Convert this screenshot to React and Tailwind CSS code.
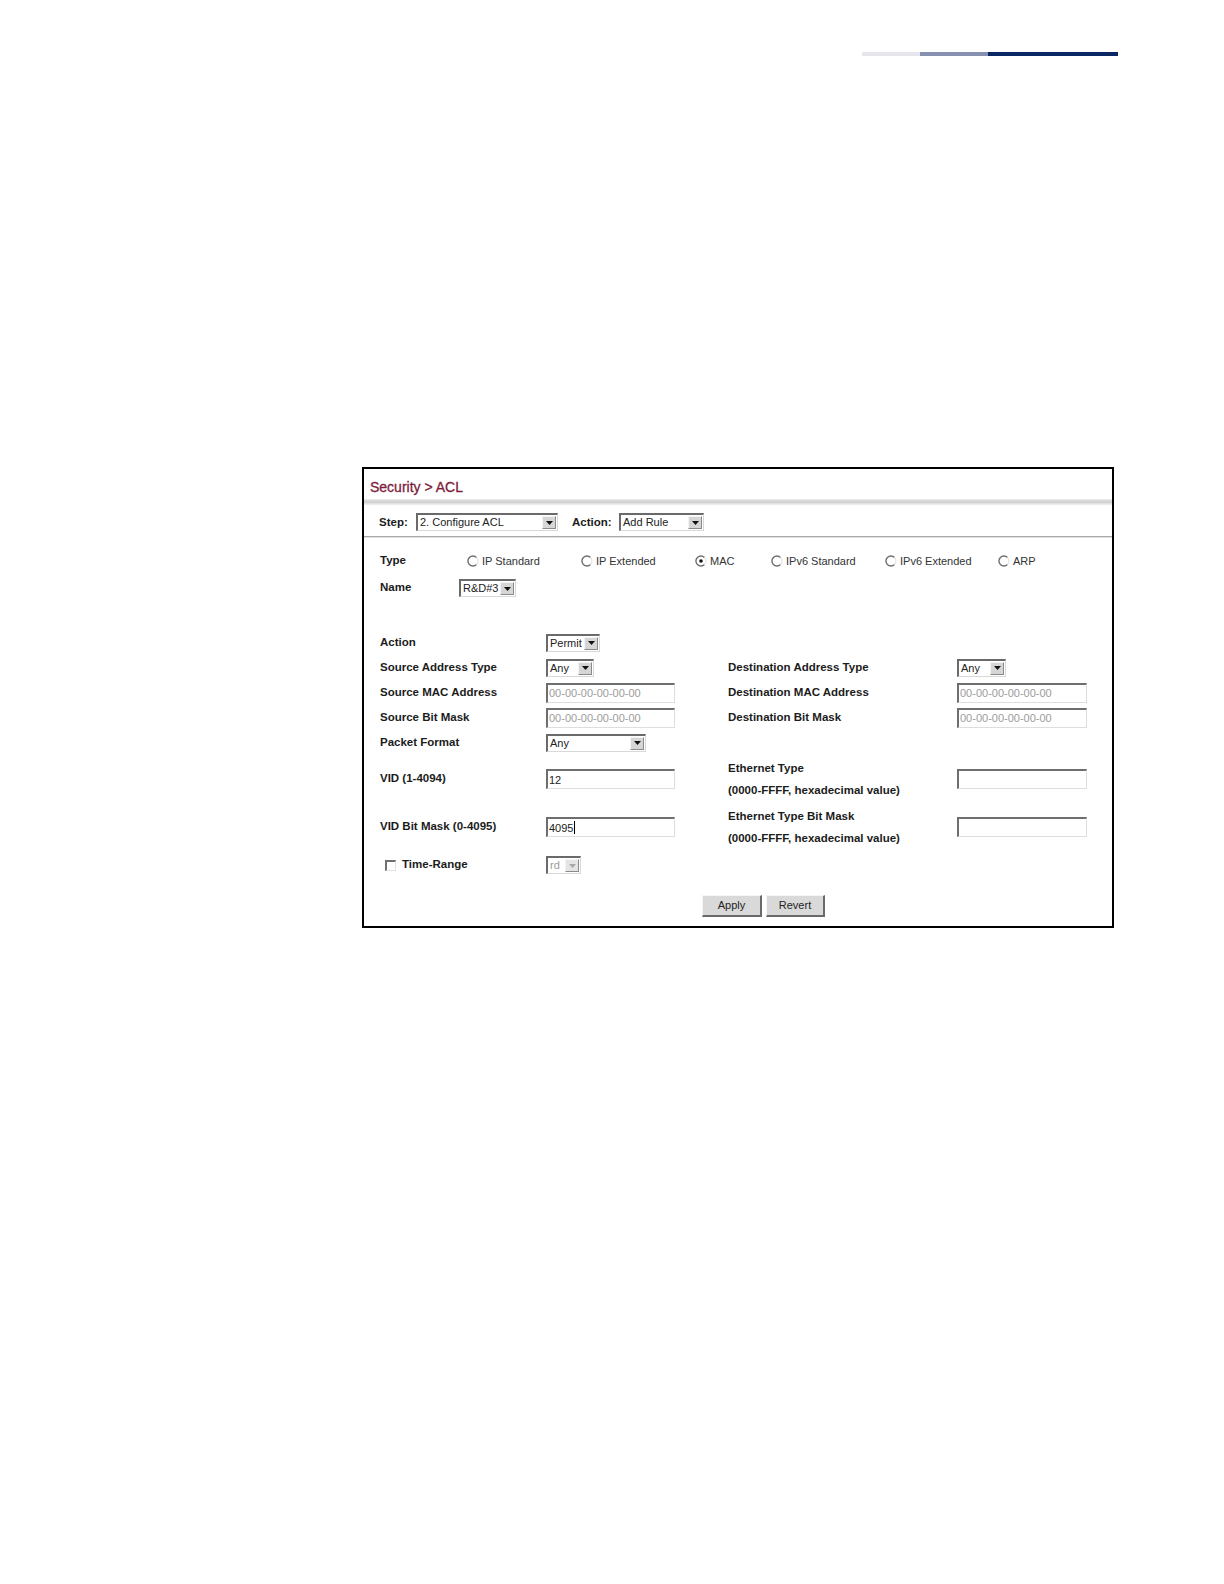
import React from "react";

function Arrow({ disabled }) {
  return (
    <div className={`m-[1px] flex w-[14px] items-center justify-center border border-t-[#f4f4f4] border-l-[#f4f4f4] border-b-[#8a8a8a] border-r-[#8a8a8a] ${disabled ? "bg-[#e4e4e4]" : "bg-[#d6d6d6]"}`}>
      <svg width="7" height="4" viewBox="0 0 7 4">
        <path d="M0 0 L7 0 L3.5 4 Z" fill={disabled ? "#a8a8a8" : "#111"} />
      </svg>
    </div>
  );
}

function Select({ cls, value, disabled }) {
  return (
    <div className={`flex h-[18px] border-t-2 border-l-2 border-b border-r border-t-[#6a6a6a] border-l-[#6a6a6a] border-b-[#d8d8d8] border-r-[#d8d8d8] bg-white ${cls}`}>
      <span className={`flex-1 truncate pl-[2px] text-[11px] leading-[15px] ${disabled ? "text-[#9a9a9a]" : "text-[#222]"}`}>{value}</span>
      <Arrow disabled={disabled} />
    </div>
  );
}

function Input({ cls, value, placeholder, caret }) {
  return (
    <div className={`flex h-[20px] items-center border-t-2 border-l-2 border-b border-r border-t-[#6e6e6e] border-l-[#6e6e6e] border-b-[#dedede] border-r-[#dedede] bg-white pl-[1px] ${cls}`}>
      {value ? (
        <span className="text-[11px] leading-[14px] text-[#222]">{value}</span>
      ) : (
        <span className="text-[11px] leading-[14px] text-[#9c9c9c]">{placeholder}</span>
      )}
      {caret && <span className="ml-[1px] h-[13px] w-[1px] bg-black" />}
    </div>
  );
}

function Radio({ checked }) {
  return (
    <svg width="12" height="12" viewBox="0 0 12 12" className="shrink-0">
      <circle cx="6" cy="6" r="5" fill="#fff" />
      <path d="M9.5 2.5 A5 5 0 1 0 9.5 9.5" fill="none" stroke="#6e6e6e" strokeWidth="1.4" />
      <path d="M9.5 2.5 A5 5 0 0 1 9.5 9.5" fill="none" stroke="#e4e4e4" strokeWidth="1.2" />
      {checked && <circle cx="6" cy="6" r="1.8" fill="#111" />}
    </svg>
  );
}

function RadioItem({ cls, label, checked }) {
  return (
    <div className={`flex items-center ${cls}`}>
      <Radio checked={checked} />
      <span className="ml-[3px] text-[11px] text-[#333]">{label}</span>
    </div>
  );
}

const L = "text-[11.5px] font-bold text-[#1c1c1c]";
const R = "text-[11.5px] font-bold text-[#1c1c1c]";

function Button({ children, cls }) {
  return (
    <div className={`flex h-[22px] items-center justify-center border-t border-l border-b-2 border-r-2 border-t-[#f6f6f6] border-l-[#f6f6f6] border-b-[#6a6a6a] border-r-[#6a6a6a] bg-[#d9d9d9] text-[11px] text-[#222] ${cls}`}>
      {children}
    </div>
  );
}

export default function App() {
  return (
    <div className="min-h-[1584px] w-full bg-white font-['Liberation_Sans',Arial,sans-serif]">
      <div className="flex pl-[862px] pt-[52px]">
        <div className="h-[4px] w-[58px] bg-[#e6e6ec]" />
        <div className="h-[4px] w-[68px] bg-[#8790b0]" />
        <div className="h-[4px] w-[130px] bg-[#0b2763]" />
      </div>

      <div className="ml-[362px] mt-[411px] flex h-[461px] w-[752px] flex-col border-2 border-black bg-white">
        {/* Title */}
        <div className="h-[30px] pl-[6px] pt-[6px]">
          <span className="text-[14px] leading-[18px] text-[#7d1c3c] [-webkit-text-stroke:0.3px_#7d1c3c]">Security &gt; ACL</span>
        </div>
        <div className="h-[6px] bg-gradient-to-b from-[#ececec] via-[#cdcdcd] to-[#f2f2f2]" />

        {/* Step row */}
        <div className="flex h-[31px] items-start pl-[15px] pt-[8px]">
          <div className={`w-[37px] leading-[18px] ${L}`}>Step:</div>
          <Select cls="w-[142px]" value="2. Configure ACL" />
          <div className={`ml-[14px] w-[47px] leading-[18px] ${L}`}>Action:</div>
          <Select cls="w-[85px]" value="Add Rule" />
        </div>
        <div className="h-[1px] bg-[#a9a9a9]" />
        <div className="h-[1px] bg-[#e2e2e2]" />

        {/* Type row */}
        <div className="mt-[12px] flex h-[22px] items-center pl-[16px]">
          <div className={`w-[87px] ${L}`}>Type</div>
          <RadioItem cls="w-[114px]" label="IP Standard" />
          <RadioItem cls="w-[114px]" label="IP Extended" />
          <RadioItem cls="w-[76px]" label="MAC" checked />
          <RadioItem cls="w-[114px]" label="IPv6 Standard" />
          <RadioItem cls="w-[113px]" label="IPv6 Extended" />
          <RadioItem cls="w-[60px]" label="ARP" />
        </div>

        {/* Name row */}
        <div className="mt-[5px] flex h-[22px] items-center pl-[16px]">
          <div className={`w-[79px] ${L}`}>Name</div>
          <Select cls="w-[57px]" value="R&D#3" />
        </div>

        {/* Form grid */}
        <div className="mt-[31px] grid grid-cols-[166px_182px_229px_1fr] pl-[16px]">
          <div className={`flex h-[25px] items-center ${L}`}>Action</div>
          <div className="flex h-[25px] items-center"><Select cls="w-[54px]" value="Permit" /></div>
          <div className="h-[25px]" />
          <div className="h-[25px]" />

          <div className={`flex h-[25px] items-center ${L}`}>Source Address Type</div>
          <div className="flex h-[25px] items-center"><Select cls="w-[48px]" value="Any" /></div>
          <div className={`flex h-[25px] items-center ${R}`}>Destination Address Type</div>
          <div className="flex h-[25px] items-center"><Select cls="w-[49px]" value="Any" /></div>

          <div className={`flex h-[25px] items-center ${L}`}>Source MAC Address</div>
          <div className="flex h-[25px] items-center"><Input cls="w-[129px]" placeholder="00-00-00-00-00-00" /></div>
          <div className={`flex h-[25px] items-center ${R}`}>Destination MAC Address</div>
          <div className="flex h-[25px] items-center"><Input cls="w-[130px]" placeholder="00-00-00-00-00-00" /></div>

          <div className={`flex h-[25px] items-center ${L}`}>Source Bit Mask</div>
          <div className="flex h-[25px] items-center"><Input cls="w-[129px]" placeholder="00-00-00-00-00-00" /></div>
          <div className={`flex h-[25px] items-center ${R}`}>Destination Bit Mask</div>
          <div className="flex h-[25px] items-center"><Input cls="w-[130px]" placeholder="00-00-00-00-00-00" /></div>

          <div className={`flex h-[25px] items-center ${L}`}>Packet Format</div>
          <div className="flex h-[25px] items-center"><Select cls="w-[100px]" value="Any" /></div>
          <div className="h-[25px]" />
          <div className="h-[25px]" />

          <div className={`flex h-[48px] items-center ${L}`}>VID (1-4094)</div>
          <div className="flex h-[48px] items-center"><Input cls="w-[129px]" value="12" /></div>
          <div className={`flex h-[48px] flex-col justify-center ${R}`}>
            <div className="leading-[22px]">Ethernet Type</div>
            <div className="leading-[22px]">(0000-FFFF, hexadecimal value)</div>
          </div>
          <div className="flex h-[48px] items-center"><Input cls="w-[130px]" /></div>

          <div className={`flex h-[48px] items-center ${L}`}>VID Bit Mask (0-4095)</div>
          <div className="flex h-[48px] items-center"><Input cls="w-[129px]" value="4095" caret /></div>
          <div className={`flex h-[48px] flex-col justify-center ${R}`}>
            <div className="leading-[22px]">Ethernet Type Bit Mask</div>
            <div className="leading-[22px]">(0000-FFFF, hexadecimal value)</div>
          </div>
          <div className="flex h-[48px] items-center"><Input cls="w-[130px]" /></div>

          <div className={`flex h-[28px] items-center pl-[5px] ${L}`}>
            <span className="mr-[6px] h-[11px] w-[11px] border-t-2 border-l-2 border-b border-r border-t-[#707070] border-l-[#707070] border-b-[#e0e0e0] border-r-[#e0e0e0] bg-white" />
            Time-Range
          </div>
          <div className="flex h-[28px] items-center"><Select cls="w-[35px]" value="rd" disabled /></div>
          <div className="h-[28px]" />
          <div className="h-[28px]" />
        </div>

        {/* Buttons */}
        <div className="mt-[16px] flex gap-[4px] pl-[338px]">
          <Button cls="w-[60px]">Apply</Button>
          <Button cls="w-[59px]">Revert</Button>
        </div>
      </div>
    </div>
  );
}
